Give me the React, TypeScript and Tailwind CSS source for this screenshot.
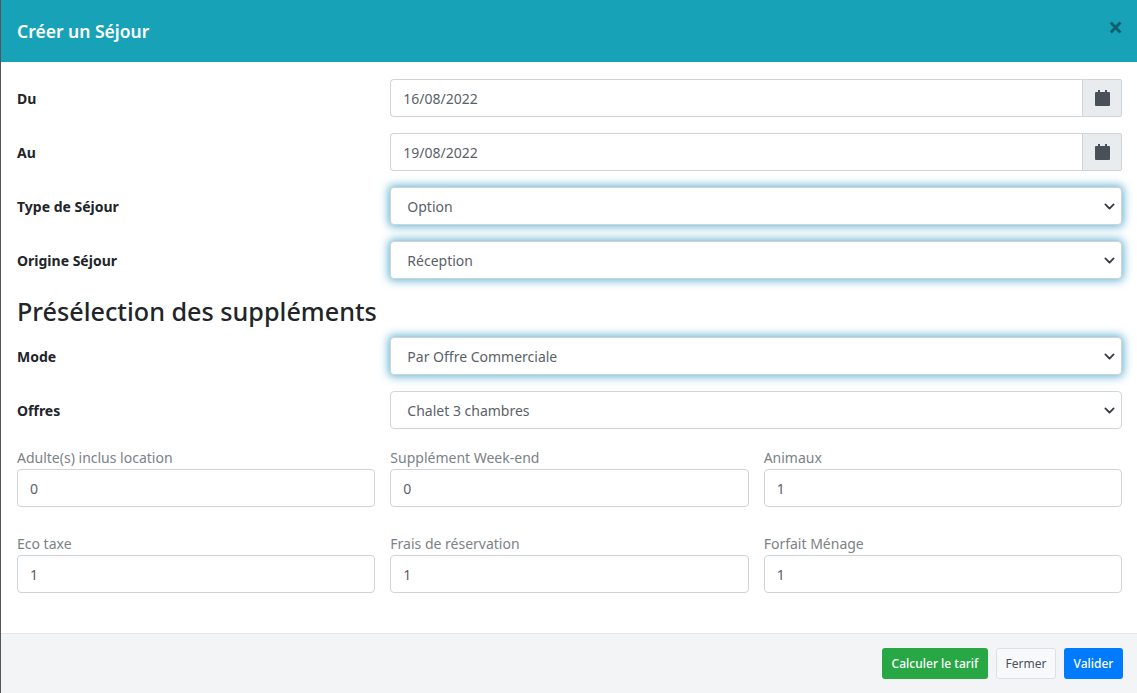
import React from "react";

const inputClass =
  "h-[38px] w-full rounded-[4px] border border-[#ced4da] bg-white px-3 text-[14px] text-[#5a6168] outline-none";

function CalendarIcon() {
  return (
    <svg viewBox="0 0 15 16" className="h-4 w-[15px]" fill="#495057">
      <path d="M3 0h2v2h5V0h2v2h2a1 1 0 0 1 1 1v12a1 1 0 0 1-1 1H1a1 1 0 0 1-1-1V3a1 1 0 0 1 1-1h2z" />
    </svg>
  );
}

function DateRow({ label, value }: { label: string; value: string }) {
  return (
    <div className="mb-4 grid grid-cols-3 items-center gap-x-[15px]">
      <label className="text-[14px] font-bold text-[#212529]">{label}</label>
      <div className="col-span-2 flex h-[38px]">
        <input
          defaultValue={value}
          className="h-full min-w-0 flex-1 rounded-l-[4px] border border-r-0 border-[#ced4da] bg-white px-3 text-[14px] text-[#5a6168] outline-none"
        />
        <div className="flex h-full w-[40px] items-center justify-center rounded-r-[2px] border border-[#ced4da] bg-[#e9ecef]">
          <CalendarIcon />
        </div>
      </div>
    </div>
  );
}

function SelectRow({
  label,
  value,
  focused,
}: {
  label: string;
  value: string;
  focused?: boolean;
}) {
  return (
    <div className="mb-4 grid grid-cols-3 items-center gap-x-[15px]">
      <label className="text-[14px] font-bold text-[#212529]">{label}</label>
      <div className="relative col-span-2">
        <select
          defaultValue={value}
          className={
            focused
              ? "h-[38px] w-full appearance-none rounded-[4px] border border-[#ced4da] bg-white px-4 text-[14px] text-[#5a6168] shadow-[0_0_9px_2px_rgba(60,160,200,0.75)] outline-none"
              : "h-[38px] w-full appearance-none rounded-[4px] border border-[#ced4da] bg-white px-4 text-[14px] text-[#5a6168] outline-none"
          }
        >
          <option>{value}</option>
        </select>
        <svg
          viewBox="0 0 16 16"
          className="pointer-events-none absolute right-[7px] top-[14px] h-[11px] w-[11px]"
          fill="none"
          stroke="#343a40"
          strokeWidth="2.6"
          strokeLinecap="round"
          strokeLinejoin="round"
        >
          <path d="M2 5l6 6 6-6" />
        </svg>
      </div>
    </div>
  );
}

function NumberField({ label, value }: { label: string; value: string }) {
  return (
    <div>
      <label className="block h-[24px] pt-px text-[14px] leading-[24px] text-[#7b8288]">{label}</label>
      <input defaultValue={value} className={inputClass + " mb-[24px]"} />
    </div>
  );
}

export default function App() {
  return (
    <div
      className="flex h-[693px] w-[1137px] flex-col overflow-hidden border-l border-[#555] bg-white"
      style={{ fontFamily: '"Noto Sans", sans-serif' }}
    >
      <header className="flex h-[62px] shrink-0 items-center justify-between bg-[#17a2b8] pl-4 pr-[14px]">
        <h5 className="text-[17.5px] font-semibold text-white">Créer un Séjour</h5>
        <button className="mb-[8px] text-[26px] font-bold leading-none text-[#0f5f6c]">×</button>
      </header>

      <main className="flex-1 pl-4 pr-[15px] pt-[17px]">
        <DateRow label="Du" value="16/08/2022" />
        <DateRow label="Au" value="19/08/2022" />
        <SelectRow label="Type de Séjour" value="Option" focused />
        <SelectRow label="Origine Séjour" value="Réception" focused />
        <h3 className="mb-[8px] h-[34px] text-[25.2px] font-medium leading-[32px] text-[#212529]">
          Présélection des suppléments
        </h3>
        <SelectRow label="Mode" value="Par Offre Commerciale" focused />
        <SelectRow label="Offres" value="Chalet 3 chambres" />
        <div className="grid grid-cols-3 gap-x-[15px]">
          <NumberField label="Adulte(s) inclus location" value="0" />
          <NumberField label="Supplément Week-end" value="0" />
          <NumberField label="Animaux" value="1" />
          <NumberField label="Eco taxe" value="1" />
          <NumberField label="Frais de réservation" value="1" />
          <NumberField label="Forfait Ménage" value="1" />
        </div>
      </main>

      <footer className="flex h-[60px] shrink-0 items-center justify-end gap-2 border-t border-[#e4e6ea] bg-[#f3f4f6] pr-[14px]">
        <button className="h-[31px] w-[106px] rounded-[3px] bg-[#28a745] pt-px text-[12px] font-medium text-white">
          Calculer le tarif
        </button>
        <button className="h-[31px] w-[60px] rounded-[3px] border border-[#dcdfe3] bg-[#f8f9fa] pt-px text-[12px] text-[#495057]">
          Fermer
        </button>
        <button className="h-[31px] w-[59px] rounded-[3px] bg-[#007bff] pt-px text-[12px] font-medium text-white">
          Valider
        </button>
      </footer>
    </div>
  );
}
